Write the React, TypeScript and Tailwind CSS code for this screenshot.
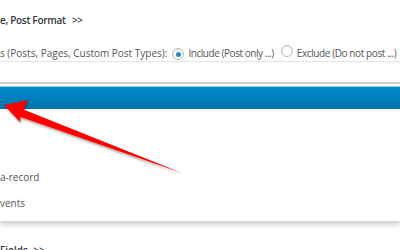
import { } from 'react';

function Radio({ checked }: { checked?: boolean }) {
  return (
    <span className="inline-flex h-[12px] w-[12px] shrink-0 items-center justify-center rounded-full border border-[#b4b9be] bg-white shadow-[inset_0_1px_2px_rgba(0,0,0,0.1)]">
      {checked && <span className="h-[5px] w-[5px] rounded-full bg-[#1e8cbe]" />}
    </span>
  );
}

export default function App() {
  return (
    <div className="relative h-[250px] w-[400px] overflow-hidden bg-white font-['Open_Sans','Noto_Sans',sans-serif] text-[10px] text-[#555]">
      {/* Settings rows */}
      <div className="flex h-[62px] flex-col border-b border-[#e2e2e2]">
        <div className="mt-[13px] whitespace-nowrap text-[10px] font-semibold tracking-[-0.3px] text-[#32373c]">
          e, Post Format <span className="ml-[4px]">&gt;&gt;</span>
        </div>
        <div className="mt-[17px] flex items-center whitespace-nowrap">
          <span>s (Posts, Pages, Custom Post Types):</span>
          <span className="ml-[5px] mr-[4px]"><Radio checked /></span>
          <span className="tracking-[-0.45px]">Include (Post only ...)</span>
          <span className="ml-[7px] mr-[4px]"><Radio /></span>
          <span className="tracking-[-0.4px]">Exclude (Do not post ...)</span>
        </div>
      </div>

      {/* Open dropdown */}
      <div className="mt-[20px] border-t-2 border-[#cfcfcf] pt-[2px]">
        <div className="h-[23px] border-t border-[#9cc9e6] bg-gradient-to-b from-[#008bd0] to-[#0074ab]" />
        <div className="h-[112px] bg-white shadow-[0_4px_5px_rgba(0,0,0,0.18)]">
          <div className="flex flex-col pt-[61px]">
            <div className="h-[26px] whitespace-nowrap leading-[14px]">a-record</div>
            <div className="h-[26px] whitespace-nowrap leading-[14px]">vents</div>
          </div>
        </div>
      </div>

      <div className="mt-[22px] whitespace-nowrap text-[10px] font-semibold text-[#32373c]">
        Fields <span className="ml-[3px]">&gt;&gt;</span>
      </div>

      {/* Red annotation arrow */}
      <svg className="absolute left-0 top-0" width="400" height="250" viewBox="0 0 400 250">
        <defs>
          <filter id="sh" x="-10%" y="-10%" width="130%" height="130%">
            <feDropShadow dx="1" dy="2" stdDeviation="1" floodColor="#000" floodOpacity="0.35" />
          </filter>
        </defs>
        <polygon
          points="4,105 28,100 23.5,109.5 182,173 20.5,117 20,122"
          fill="#ff0000"
          filter="url(#sh)"
        />
      </svg>
    </div>
  );
}
